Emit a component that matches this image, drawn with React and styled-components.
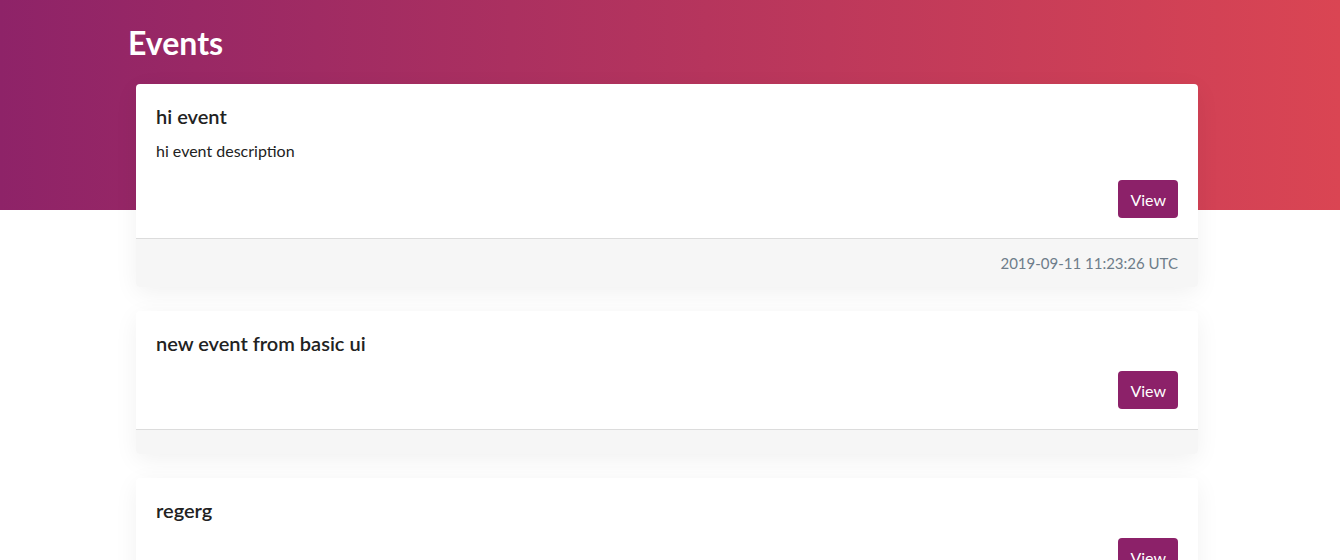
import React from 'react'
import styled, {createGlobalStyle} from 'styled-components'

const GlobalStyle = createGlobalStyle`
body {
    margin: 0;
    font-family: Lato, "Open Sans", sans-serif;
    color: #212529;
    background: #fff;
}
`

const Page = styled('div')`
min-height: 560px;
background: linear-gradient(to right, #8e2368, #da4553) no-repeat;
background-size: 100% 210px;
padding-bottom: 40px;
`

const Container = styled('div')`
width: 1062px;
margin-left: 136px;
`

const Heading = styled('h1')`
margin: 0 0 22px -8px;
padding-top: 24px;
font-size: 32px;
line-height: 38px;
font-weight: 700;
color: #fff;
`

const CardList = styled('div')`
display: flex;
flex-direction: column;
gap: 24px;
`

const Card = styled('div')`
background: #fff;
border-radius: 4px;
overflow: hidden;
box-shadow: 0 6px 24px rgba(0, 0, 0, 0.06);
`

const CardBody = styled('div')`
padding: 20px;
display: flex;
flex-direction: column;
`

const Title = styled('h3')`
margin: 0;
font-size: 20px;
line-height: 25px;
font-weight: 600;
color: #222;
`

const Description = styled('p')`
margin: 11px 0 3px;
font-size: 16px;
line-height: 22px;
color: #222;
`

const Actions = styled('div')`
display: flex;
justify-content: flex-end;
margin-top: 15px;
`

const ViewButton = styled('button')`
height: 38px;
padding: 0 12px;
border: none;
border-radius: 4px;
background: #8c2169;
color: #fff;
font-family: inherit;
font-size: 16px;
cursor: pointer;
`

const CardFooter = styled('div')`
border-top: 1px solid #dcdcdc;
background: #f6f6f6;
padding: 12px 20px;
line-height: 24px;
font-size: 15px;
text-align: right;
color: #6e7d8a;
`

const events = [
    {id: 1, title: 'hi event', description: 'hi event description', date: '2019-09-11 11:23:26 UTC'},
    {id: 2, title: 'new event from basic ui'},
    {id: 3, title: 'regerg'},
]

export default function App(){
    return(
        <Page>
            <GlobalStyle />
            <Container>
                <Heading>Events</Heading>
                <CardList>
                    {events.map(ev => (
                        <Card key={ev.id}>
                            <CardBody>
                                <Title>{ev.title}</Title>
                                {ev.description && <Description>{ev.description}</Description>}
                                <Actions>
                                    <ViewButton>View</ViewButton>
                                </Actions>
                            </CardBody>
                            <CardFooter>{ev.date}</CardFooter>
                        </Card>
                    ))}
                </CardList>
            </Container>
        </Page>
    )
}
